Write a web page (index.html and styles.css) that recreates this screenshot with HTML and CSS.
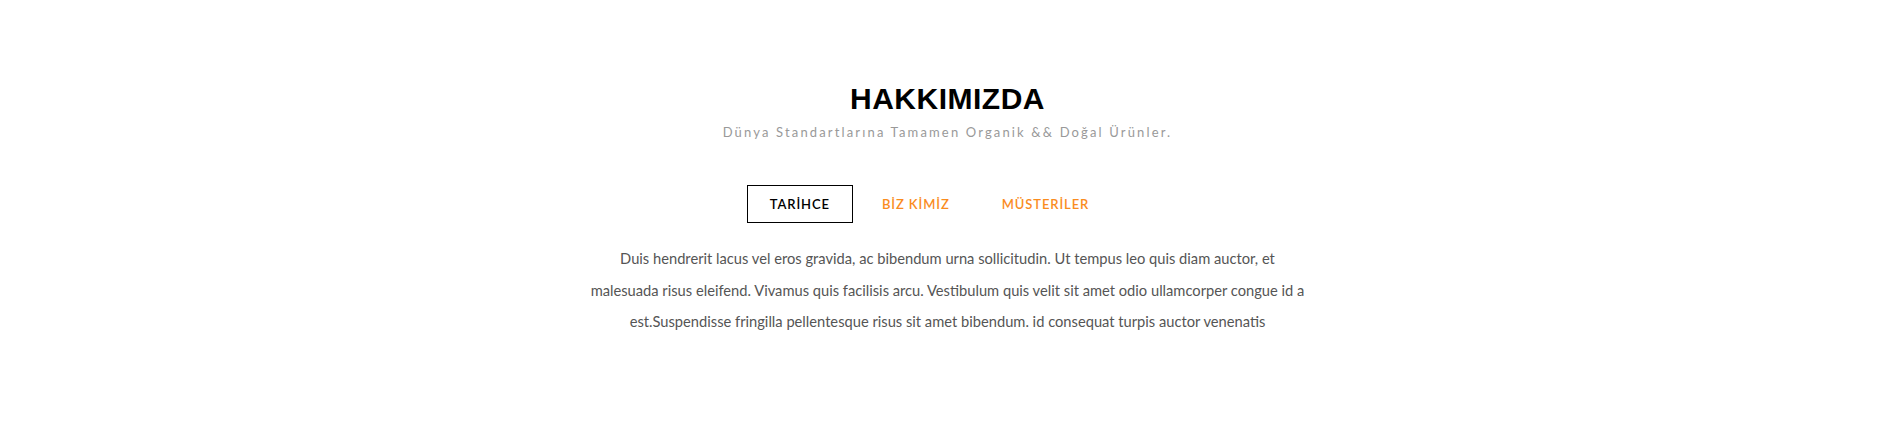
FILE: index.html
```html
<!DOCTYPE html>
<html lang="tr">
<head>
<meta charset="utf-8">
<title>Hakkımızda</title>
<link rel="stylesheet" href="styles.css">
</head>
<body>
<section class="about">
  <header class="about-head">
    <h2 class="about-title">HAKKIMIZDA</h2>
    <p class="about-sub">Dünya Standartlarına Tamamen Organik &amp;&amp; Doğal Ürünler.</p>
  </header>
  <ul class="tabs">
    <li class="tab tab-active">TARİHCE</li>
    <li class="tab">BİZ KİMİZ</li>
    <li class="tab">MÜSTERİLER</li>
  </ul>
  <div class="tab-content">
    <p class="tab-text">Duis hendrerit lacus vel eros gravida, ac bibendum urna sollicitudin. Ut tempus leo quis diam auctor, et malesuada risus eleifend. Vivamus quis facilisis arcu. Vestibulum quis velit sit amet odio ullamcorper congue id a est.Suspendisse fringilla pellentesque risus sit amet bibendum. id consequat turpis auctor venenatis</p>
  </div>
</section>
</body>
</html>
```

FILE: styles.css
```css
html, body {
  margin: 0;
  padding: 0;
  background: #fff;
}
body {
  font-family: Lato, "Open Sans", sans-serif;
}
.about {
  padding: 84px 0 0 7px;
}
.about-head {
  text-align: center;
}
.about-title {
  margin: 0;
  font-family: "Liberation Sans", Arial, sans-serif;
  font-weight: 700;
  font-size: 30px;
  line-height: 30px;
  letter-spacing: 0.5px;
  color: #000;
}
.about-sub {
  margin: 12px 0 0;
  font-size: 13px;
  line-height: 13px;
  letter-spacing: 2.15px;
  color: #999;
}
.tabs {
  list-style: none;
  margin: 46px 0 0;
  padding: 0 36px 0 0;
  display: flex;
  justify-content: center;
  gap: 6px;
}
.tab {
  height: 36px;
  padding: 0 22px;
  border: 1px solid transparent;
  display: flex;
  align-items: center;
  font-size: 13px;
  font-weight: 600;
  letter-spacing: 0.9px;
  color: #fa8c1e;
}
.tab-active {
  border-color: #000;
  color: #000;
}
.tab-content {
  margin: 20px auto 0;
  width: 722px;
}
.tab-text {
  margin: 0;
  text-align: center;
  font-size: 14.7px;
  line-height: 31.5px;
  color: #555;
}
```
